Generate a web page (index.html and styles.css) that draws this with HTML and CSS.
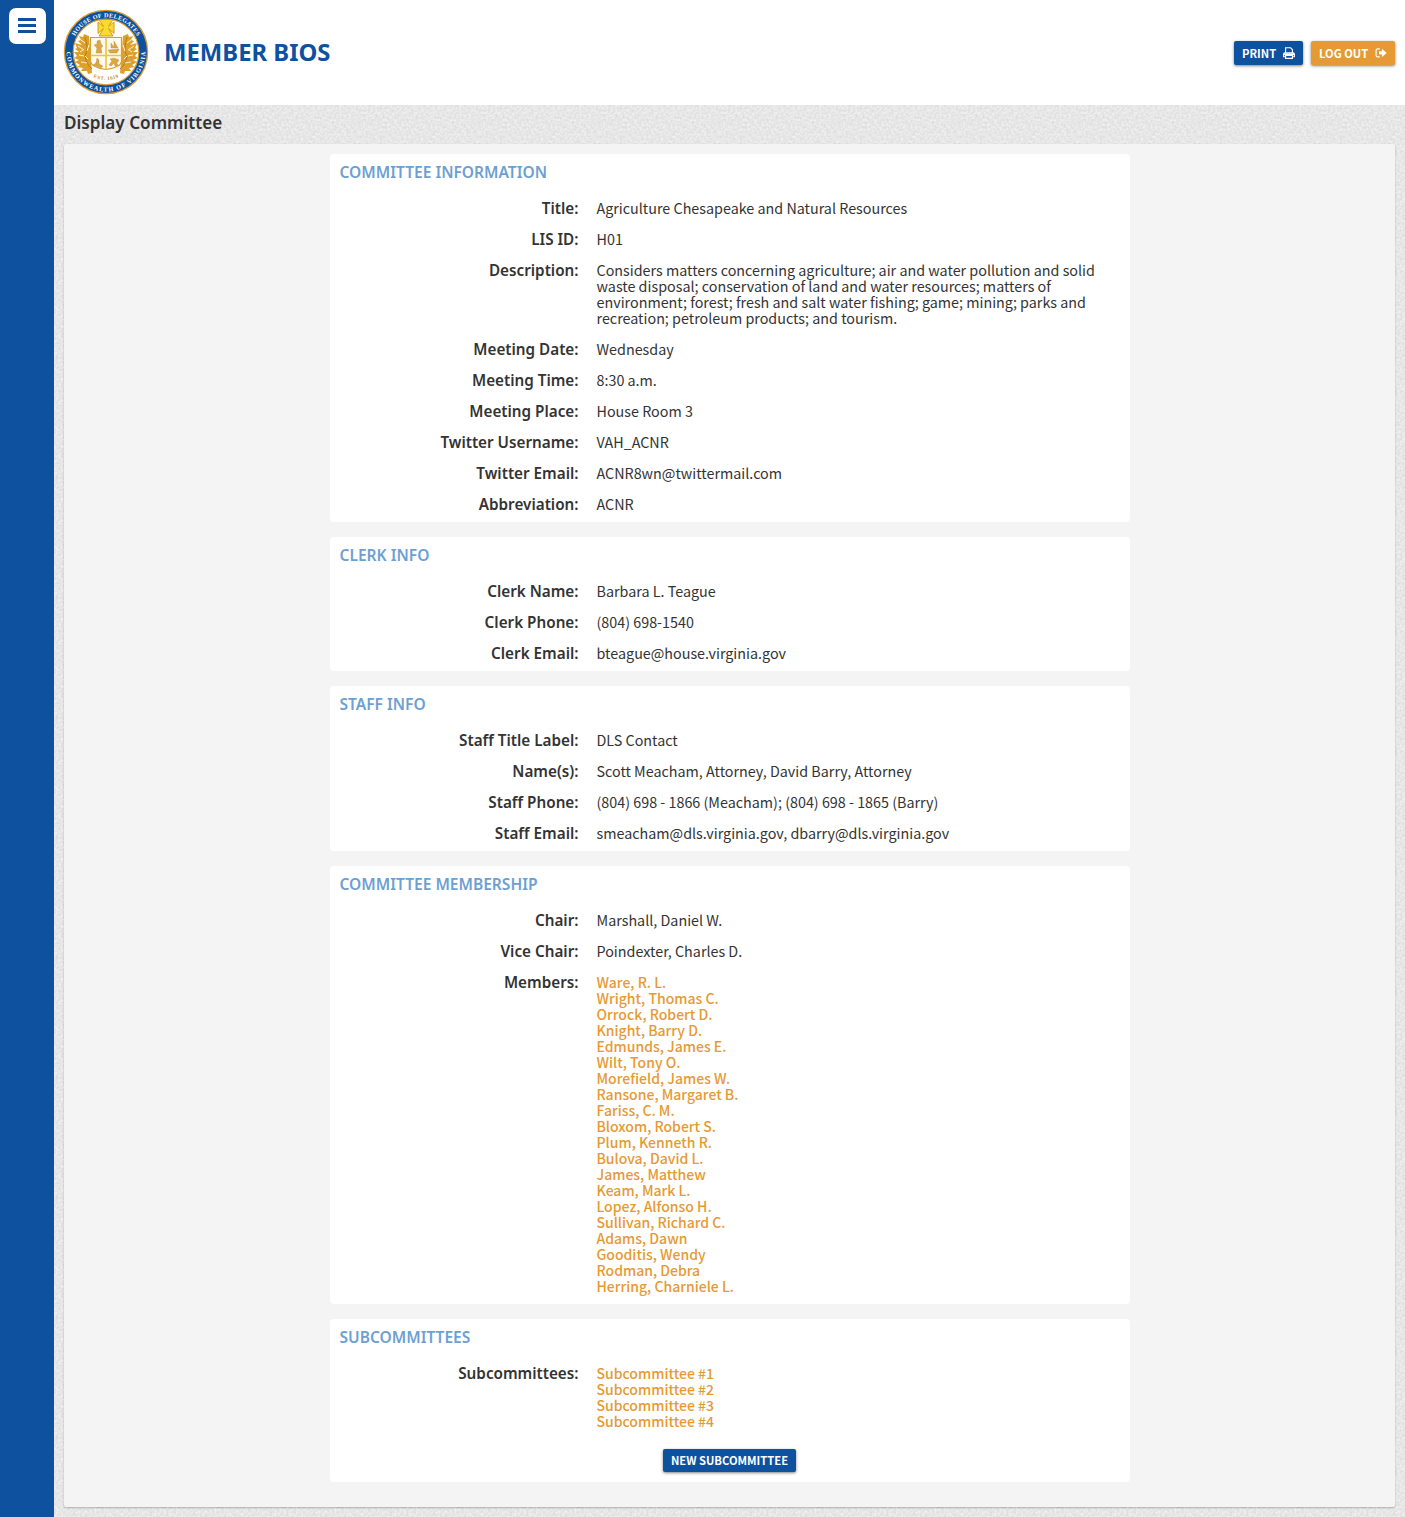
FILE: index.html
```
<!DOCTYPE html>
<html lang="en">
<head>
<meta charset="utf-8">
<title>Member Bios - Display Committee</title>
<link rel="stylesheet" href="styles.css">
</head>
<body>
<aside class="sidebar">
  <button class="menu-button" aria-label="Menu">
    <svg width="18" height="16" viewBox="0 0 18 16"><path d="M0 1.500h18M0 7.500h18M0 13.500h18" stroke="#0e519f" stroke-width="2.900" stroke-linecap="butt"/></svg>
  </button>
</aside>
<div class="page">
  <header class="header">
    <svg class="seal" width="86" height="86" viewBox="0 0 86 86">
      <defs>
        <path id="arc-top" d="M8.400 43a34.600 34.600 0 0 1 69.200 0"/>
        <path id="arc-bottom" d="M6.600 28a39.400 39.400 0 1 0 72.800 0"/>
        <path id="arc-est" d="M20 62Q43 80 66 62"/>
        <g id="leaves" fill="#dda12b">
          <path d="M26 27l-5-2-1 3-4-1 2 4-3 1 4 4-7-2 2 5-2 1 4 3-5 0 3 4-3 2 5 2-4 2 5 3-3 2 6 1-2 3 6 0 1 3 4-1z"/>
          <path d="M22 28q4 12 0 19 1 8 7 13" fill="none" stroke="#b7791a" stroke-width="1"/>
          <path d="M18 31l4 3M15 37l6 4M16 46l5 1M18 53l6 1M26 36l-2 6M25 50l-3-3M20 41l-3 2" fill="none" stroke="#fff3cf" stroke-width="1"/>
        </g>
      </defs>
      <circle cx="43" cy="43" r="41.600" fill="#0e519f" stroke="#d69c32" stroke-width="1.300"/>
      <circle cx="43" cy="43" r="32.800" fill="#fffefa" stroke="#d69c32" stroke-width="1.200"/>
      <text class="seal-text"><textPath href="#arc-top" startOffset="50%" text-anchor="middle" textLength="76">HOUSE OF DELEGATES</textPath></text>
      <text class="seal-text"><textPath href="#arc-bottom" startOffset="50%" text-anchor="middle" textLength="124">COMMONWEALTH OF VIRGINIA</textPath></text>
      <use href="#leaves"/>
      <use href="#leaves" transform="translate(86 0) scale(-1 1)"/>
      <g stroke="#d6a02c" stroke-width="1.200">
        <path d="M27.500 28.500h31v24q-1 6-15.500 8-14.500-2-15.500-8z" fill="#fffaf0"/>
        <path d="M43 28.500v32M27.500 46.500h31" stroke="#f0c33a" stroke-width="1.600"/>
      </g>
      <path d="M36 10.500h14l-4.500 7 5.500-4.500v11.500l-5.500-5 4.500 7.500H36l4.500-7.500-5.500 5V13l5.500 4.500z" fill="#f8db2c" stroke="#c9961c" stroke-width=".9"/>
      <g fill="#dba548" stroke="#bf8a34" stroke-width=".4">
        <path d="M34 32l3-1 1 4 2 2-2 2 1 5h-6l1-5-3-3 3-1z"/>
        <path d="M45 41l11-1-2 4h-7zM48 39v-5l3 4v-6l4 7z"/>
        <path d="M34 49l2 2v4l4 2-2 2-8-3 3-2z"/>
        <path d="M47 50l4-1 5 2-2 3 1 3h-3l-1-3-3 3-2-1 3-4z"/>
      </g>
      <text class="seal-est"><textPath href="#arc-est" startOffset="50%" text-anchor="middle" textLength="26">EST. 1619</textPath></text>
    </svg>
    <h1 class="brand">MEMBER BIOS</h1>
    <div class="actions">
      <button class="btn">PRINT
        <svg width="12" height="12" viewBox="0 0 12 12" fill="none" stroke="#fff" stroke-width="1.100"><path d="M2.600 6V.8h5L9.400 2.500V6"/><path d="M2.500 9.800H.6V7.200q0-1.400 1.400-1.400h8q1.400 0 1.400 1.400v2.600H9.500M2.600 8.400h6.800v3H2.600z"/><path d="M.8 6.200h10.400v1.900H.8z" fill="#fff" stroke="none"/></svg>
      </button>
      <button class="btn btn-orange">LOG OUT
        <svg width="12" height="12" viewBox="0 0 12 12"><path d="M4.800 1.900H2.600Q1.100 1.900 1.100 3.400v5Q1.100 9.900 2.600 9.900h2.200" fill="none" stroke="#fff" stroke-width="1.100"/><path d="M4 4.200H7V1.700l4.700 4.200L7 10.100V7.600H4z" fill="#fff"/></svg>
      </button>
    </div>
  </header>
  <main class="main">
    <h2 class="page-title">Display Committee</h2>
    <div class="panel">
      <section class="card">
        <h3 class="card-title">COMMITTEE INFORMATION</h3>
        <dl class="fields">
          <dt>Title:</dt><dd>Agriculture Chesapeake and Natural Resources</dd>
          <dt>LIS ID:</dt><dd>H01</dd>
          <dt>Description:</dt><dd>Considers matters concerning agriculture; air and water pollution and solid<br>waste disposal; conservation of land and water resources; matters of<br>environment; forest; fresh and salt water fishing; game; mining; parks and<br>recreation; petroleum products; and tourism.</dd>
          <dt>Meeting Date:</dt><dd>Wednesday</dd>
          <dt>Meeting Time:</dt><dd>8:30 a.m.</dd>
          <dt>Meeting Place:</dt><dd>House Room 3</dd>
          <dt>Twitter Username:</dt><dd>VAH_ACNR</dd>
          <dt>Twitter Email:</dt><dd>ACNR8wn@twittermail.com</dd>
          <dt>Abbreviation:</dt><dd>ACNR</dd>
        </dl>
      </section>
      <section class="card">
        <h3 class="card-title">CLERK INFO</h3>
        <dl class="fields">
          <dt>Clerk Name:</dt><dd>Barbara L. Teague</dd>
          <dt>Clerk Phone:</dt><dd>(804) 698-1540</dd>
          <dt>Clerk Email:</dt><dd>bteague@house.virginia.gov</dd>
        </dl>
      </section>
      <section class="card">
        <h3 class="card-title">STAFF INFO</h3>
        <dl class="fields">
          <dt>Staff Title Label:</dt><dd>DLS Contact</dd>
          <dt>Name(s):</dt><dd>Scott Meacham, Attorney, David Barry, Attorney</dd>
          <dt>Staff Phone:</dt><dd>(804) 698 - 1866 (Meacham); (804) 698 - 1865 (Barry)</dd>
          <dt>Staff Email:</dt><dd>smeacham@dls.virginia.gov, dbarry@dls.virginia.gov</dd>
        </dl>
      </section>
      <section class="card">
        <h3 class="card-title">COMMITTEE MEMBERSHIP</h3>
        <dl class="fields">
          <dt>Chair:</dt><dd>Marshall, Daniel W.</dd>
          <dt>Vice Chair:</dt><dd>Poindexter, Charles D.</dd>
          <dt>Members:</dt>
          <dd class="links">
            <a>Ware, R. L.</a><a>Wright, Thomas C.</a><a>Orrock, Robert D.</a><a>Knight, Barry D.</a><a>Edmunds, James E.</a><a>Wilt, Tony O.</a><a>Morefield, James W.</a><a>Ransone, Margaret B.</a><a>Fariss, C. M.</a><a>Bloxom, Robert S.</a><a>Plum, Kenneth R.</a><a>Bulova, David L.</a><a>James, Matthew</a><a>Keam, Mark L.</a><a>Lopez, Alfonso H.</a><a>Sullivan, Richard C.</a><a>Adams, Dawn</a><a>Gooditis, Wendy</a><a>Rodman, Debra</a><a>Herring, Charniele L.</a>
          </dd>
        </dl>
      </section>
      <section class="card">
        <h3 class="card-title">SUBCOMMITTEES</h3>
        <dl class="fields">
          <dt>Subcommittees:</dt>
          <dd class="links"><a>Subcommittee #1</a><a>Subcommittee #2</a><a>Subcommittee #3</a><a>Subcommittee #4</a></dd>
        </dl>
        <button class="btn btn-new">NEW SUBCOMMITTEE</button>
      </section>
    </div>
  </main>
</div>
</body>
</html>
```
FILE: styles.css
```
* { box-sizing: border-box; }
body {
  margin: 0;
  display: flex;
  height: 1517px;
  overflow: hidden;
  color: #333;
  font: 14.340px/16px "Noto Sans CJK SC", "Noto Sans", sans-serif;
}
h1, h2, h3, dl, dd { margin: 0; }
.sidebar {
  flex: none;
  width: 54px;
  padding: 8px 8px 8px 8.500px;
  background: #0e519f;
}
.menu-button {
  display: flex;
  align-items: center;
  justify-content: center;
  width: 37px;
  height: 36px;
  padding: 0;
  border: 0;
  border-radius: 7px;
  background: #fff;
}
.page { flex: 1; display: flex; flex-direction: column; }
.header {
  display: flex;
  align-items: center;
  height: 105px;
  padding: 0 10px 0 9px;
  background: #fff;
}
.seal { margin-top: -1px; }
.seal-text { font: bold 6.200px "Liberation Serif", serif; fill: #fff; }
.seal-est { font: bold 5px "Liberation Serif", serif; fill: #c58b2b; }
.brand {
  margin: -2px 0 0 15px;
  color: #0e519f;
  font: 700 23.850px/30px "Noto Sans", sans-serif;
}
.actions { display: flex; gap: 8px; margin-left: auto; }
.btn {
  display: flex;
  align-items: center;
  justify-content: space-between;
  width: 69px;
  height: 24px;
  padding: 0 8px;
  border: 0;
  border-radius: 2px;
  background: #0e519f;
  box-shadow: 0 1px 3px rgba(0, 0, 0, .5);
  color: #fff;
  font: 700 11.200px/16px "Noto Sans CJK SC", sans-serif;
  white-space: nowrap;
}
.btn-orange { width: 84px; background: #e69a33; }
.btn-new { justify-content: center; width: 133px; height: 23px; margin: 20px auto 0; padding-bottom: 1px; }
.main {
  flex: 1;
  padding: 5px 10px 10px;
  background: #e6e6e6 url("data:image/svg+xml,%3Csvg xmlns='http://www.w3.org/2000/svg' width='120' height='120'%3E%3Cfilter id='n' x='0' y='0' width='1' height='1' color-interpolation-filters='sRGB'%3E%3CfeTurbulence type='fractalNoise' baseFrequency='.42' numOctaves='2' stitchTiles='stitch'/%3E%3CfeColorMatrix values='.14 0 0 0 .835 .14 0 0 0 .835 .14 0 0 0 .835 0 0 0 0 1'/%3E%3C/filter%3E%3Crect width='120' height='120' filter='url(%23n)'/%3E%3C/svg%3E");
}
.page-title { height: 34px; font: 600 17.120px/25px "Noto Sans", sans-serif; }
.panel {
  display: flex;
  flex-direction: column;
  align-items: center;
  gap: 15px;
  height: 1363px;
  padding-top: 10px;
  border-radius: 2px;
  background: #f4f4f4;
  box-shadow: 0 1px 2px rgba(0, 0, 0, .25);
}
.card {
  width: 800px;
  padding: 10px;
  border-radius: 4px;
  background: #fff;
}
.card-title {
  height: 36px;
  color: #6d9fd2;
  font: 600 15.560px/16px "Noto Sans", sans-serif;
}
.fields {
  display: grid;
  grid-template-columns: 239px 1fr;
  column-gap: 18px;
  row-gap: 15px;
}
.fields dt {
  text-align: right;
  font: 600 15.250px/16px "Noto Sans", sans-serif;
}
.links { display: flex; flex-direction: column; align-items: flex-start; }
.links a { color: #e69a33; font-size: 14px; font-weight: 500; }
```
